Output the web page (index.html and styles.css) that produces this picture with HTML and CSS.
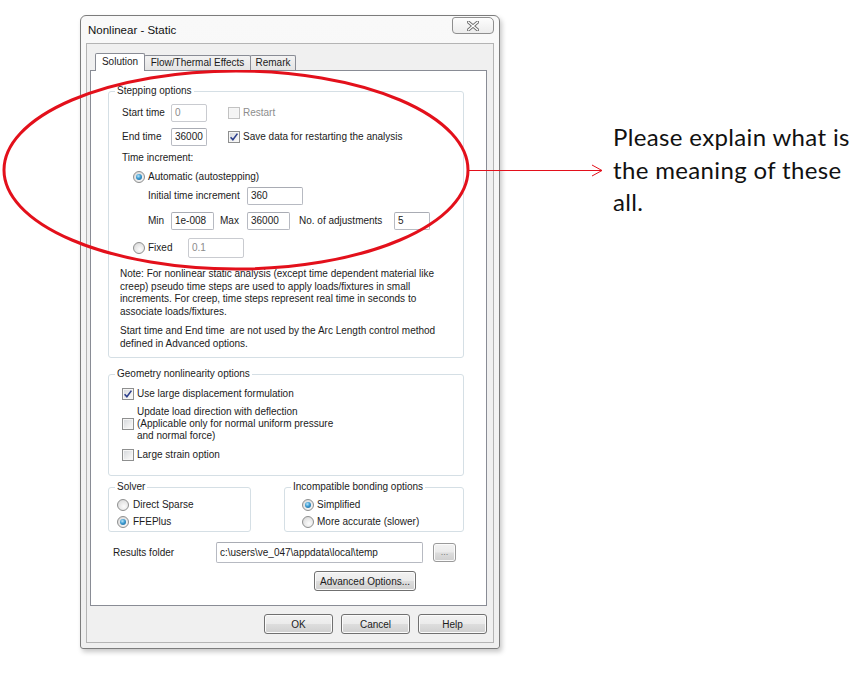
FILE: index.html
```html
<!DOCTYPE html>
<html>
<head>
<meta charset="utf-8">
<title>Nonlinear - Static</title>
<link rel="stylesheet" href="styles.css">
</head>
<body>
<div class="window">
  <div class="titlebar">
    <div class="title">Nonlinear - Static</div>
    <div class="closebtn">
      <svg width="12" height="10" viewBox="0 0 12 10">
        <path d="M1.5 1.2 L10.5 8.8 M10.5 1.2 L1.5 8.8" stroke="#6f6f6f" stroke-width="3.2" stroke-linecap="square" fill="none"/>
        <path d="M1.5 1.2 L10.5 8.8 M10.5 1.2 L1.5 8.8" stroke="#ffffff" stroke-width="1.3" stroke-linecap="square" fill="none"/>
      </svg>
    </div>
  </div>
  <div class="client">
    <div class="tabs">
      <div class="tab active">Solution</div>
      <div class="tab tab-flow">Flow/Thermal Effects</div>
      <div class="tab tab-remark">Remark</div>
    </div>
    <div class="panel">
      <fieldset class="group stepping">
        <legend>Stepping options</legend>
        <div class="gbody step-body">
          <div class="row r-start">
            <span class="lbl w-time">Start time</span>
            <span class="tb dis w-small">0</span>
            <span class="cb dis chk-gap"></span><span class="cbl dis-t">Restart</span>
          </div>
          <div class="row r-end">
            <span class="lbl w-time">End time</span>
            <span class="tb w-small">36000</span>
            <span class="cb chk-gap"><svg width="10" height="10" viewBox="0 0 10 10"><path d="M1.6 5.2 L3.9 7.8 L8.4 1.6" stroke="#2c3f8c" stroke-width="1.6" fill="none"/></svg></span><span class="cbl">Save data for restarting the analysis</span>
          </div>
          <div class="row r-inc">Time increment:</div>
          <div class="row r-auto indent1">
            <span class="rb on"></span><span class="rbl">Automatic (autostepping)</span>
          </div>
          <div class="row r-init indent2">
            <span class="lbl w-init">Initial time increment</span>
            <span class="tb w-mid">360</span>
          </div>
          <div class="row r-minmax indent2">
            <span class="lbl w-min">Min</span>
            <span class="tb w-mm">1e-008</span>
            <span class="lbl w-max">Max</span>
            <span class="tb w-mm">36000</span>
            <span class="lbl w-adj">No. of adjustments</span>
            <span class="tb w-small">5</span>
          </div>
          <div class="row r-fixed indent1">
            <span class="rb"></span><span class="rbl w-fixed">Fixed</span>
            <span class="tb dis w-mid tall">0.1</span>
          </div>
          <p class="note">Note: For nonlinear static analysis (except time dependent material like creep) pseudo time steps are used to apply loads/fixtures in small increments. For creep, time steps represent real time in seconds to associate loads/fixtures.</p>
          <p class="note note2">Start time and End time&nbsp; are not used by the Arc Length control method defined in Advanced options.</p>
        </div>
      </fieldset>

      <fieldset class="group geometry">
        <legend>Geometry nonlinearity options</legend>
        <div class="gbody geo-body">
          <div class="row g1">
            <span class="cb"><svg width="10" height="10" viewBox="0 0 10 10"><path d="M1.6 5.2 L3.9 7.8 L8.4 1.6" stroke="#2c3f8c" stroke-width="1.6" fill="none"/></svg></span><span class="cbl">Use large displacement formulation</span>
          </div>
          <div class="row g2">
            <span class="cb"></span><span class="cbl multi">Update load direction with deflection<br>(Applicable only for normal uniform pressure<br>and normal force)</span>
          </div>
          <div class="row g3">
            <span class="cb"></span><span class="cbl">Large strain option</span>
          </div>
        </div>
      </fieldset>

      <div class="pair">
        <fieldset class="group solver">
          <legend>Solver</legend>
          <div class="gbody small-body solver-body">
            <div class="row o1"><span class="rb"></span><span class="rbl">Direct Sparse</span></div>
            <div class="row o2"><span class="rb on"></span><span class="rbl">FFEPlus</span></div>
          </div>
        </fieldset>
        <fieldset class="group bonding">
          <legend>Incompatible bonding options</legend>
          <div class="gbody small-body bond-body">
            <div class="row o1"><span class="rb on"></span><span class="rbl">Simplified</span></div>
            <div class="row o2"><span class="rb"></span><span class="rbl">More accurate (slower)</span></div>
          </div>
        </fieldset>
      </div>

      <div class="results">
        <span class="lbl w-res">Results folder</span>
        <span class="tb w-path">c:\users\ve_047\appdata\local\temp</span>
        <span class="btn browse">...</span>
      </div>
      <div class="adv-row">
        <span class="btn adv">Advanced Options...</span>
      </div>
    </div>
    <div class="buttons">
      <span class="btn dlg">OK</span>
      <span class="btn dlg">Cancel</span>
      <span class="btn dlg">Help</span>
    </div>
  </div>
</div>

<svg class="annot" width="861" height="684" viewBox="0 0 861 684">
  <ellipse cx="236" cy="170" rx="232" ry="99" fill="none" stroke="#e3101b" stroke-width="3"/>
  <line x1="468" y1="170.5" x2="602" y2="170.5" stroke="#e3101b" stroke-width="1"/>
  <polyline points="592,165 602,170.5 592,176" fill="none" stroke="#e3101b" stroke-width="1"/>
</svg>

<div class="callout">Please explain what is<br>the meaning of these<br>all.</div>
</body>
</html>
```

FILE: styles.css
```css
* { box-sizing: border-box; }
html, body { margin: 0; padding: 0; }
body {
  width: 861px;
  height: 684px;
  background: #ffffff;
  position: relative;
  overflow: hidden;
  font-family: "Liberation Sans", Arial, sans-serif;
  font-size: 10px;
  color: #1b1b1b;
}

/* window */
.window {
  position: absolute;
  left: 80px;
  top: 15px;
  width: 420px;
  border: 1px solid #7c7c7c;
  border-radius: 6px 6px 3px 3px;
  background: linear-gradient(#f9f9f9, #efefef);
  padding: 0 5px 5px 5px;
  display: flex;
  flex-direction: column;
  box-shadow: 2px 3px 5px rgba(0, 0, 0, 0.22);
}
.titlebar {
  height: 27px;
  display: flex;
  justify-content: space-between;
  align-items: flex-start;
}
.title {
  font-size: 11.5px;
  line-height: 14px;
  margin: 7px 0 0 2px;
  color: #111;
}
.closebtn {
  width: 42px;
  height: 17px;
  margin-top: 1px;
  border: 1px solid #8f8f8f;
  border-radius: 3px 5px 4px 4px;
  background: linear-gradient(#fdfdfd, #ececec);
  display: flex;
  align-items: center;
  justify-content: center;
}

.client {
  border: 1px solid #b4b4b4;
  background: #f0f0f0;
  padding: 9px 6px 8px 3px;
  display: flex;
  flex-direction: column;
}

/* tabs */
.tabs {
  display: flex;
  align-items: flex-end;
  height: 17px;
  margin-left: 5px;
  position: relative;
  z-index: 2;
}
.tab {
  height: 15px;
  border: 1px solid #898c95;
  border-bottom: none;
  border-radius: 2px 2px 0 0;
  background: linear-gradient(#f3f3f3, #e4e4e4);
  display: flex;
  align-items: center;
  justify-content: center;
  line-height: 12px;
  padding-bottom: 1px;
}
.tab.active {
  width: 50px;
  height: 18px;
  margin-bottom: -1px;
  background: #ffffff;
  padding-bottom: 2px;
}
.tab-flow { width: 107px; margin-left: -1px; }
.tab-remark { width: 46px; margin-left: -1px; }

.panel {
  border: 1px solid #898c95;
  background: #ffffff;
  padding: 14px 22px 14px 17px;
  display: flex;
  flex-direction: column;
}

/* group boxes */
fieldset.group {
  margin: 0;
  padding: 0;
  border: 1px solid #d5dfe5;
  border-radius: 3px;
  min-width: 0;
}
fieldset.group legend {
  padding: 0 2px;
  margin-left: 6px;
  line-height: 12px;
  font-size: 10px;
  color: #1b1b1b;
}
.gbody { display: flex; flex-direction: column; }
.step-body { padding: 7px 0 7px 13px; }
fieldset.group.geometry { margin-top: 10px; }
.geo-body { padding: 7px 0 13px 13px; }

.row { display: flex; align-items: center; line-height: 12px; }
.r-start { height: 18px; }
.r-end { height: 18px; margin-top: 6px; }
.r-inc { height: 12px; margin-top: 6px; }
.r-auto { height: 13px; margin-top: 6px; }
.r-init { height: 18px; margin-top: 4px; }
.r-minmax { height: 18px; margin-top: 7px; }
.r-fixed { height: 20px; margin-top: 8px; }
.indent1 { padding-left: 11px; }
.indent2 { padding-left: 26px; }

.lbl { display: inline-block; white-space: nowrap; }
.w-time { width: 49px; }
.w-init { width: 99px; }
.w-min { width: 23px; }
.w-max { width: 27px; margin-left: 6px; }
.w-adj { width: 95px; margin-left: 9px; }
.w-fixed { width: 40px; }
.w-res { width: 103px; }

/* text boxes */
.tb {
  display: inline-flex;
  align-items: center;
  height: 18px;
  border: 1px solid #b7bac2;
  border-top-color: #a9acb4;
  border-radius: 2px;
  background: #ffffff;
  padding: 0 3px;
  white-space: nowrap;
  color: #1b1b1b;
}
.tb.dis { color: #8c8c8c; border-color: #c9cbd0; }
.tb.tall { height: 20px; }
.w-small { width: 36px; }
.w-mid { width: 56px; }
.w-mm { width: 43px; }
.w-path { width: 207px; height: 21px; }

/* checkboxes */
.cb {
  width: 12px;
  height: 12px;
  flex: none;
  border: 1px solid #8e8f8f;
  background: linear-gradient(135deg, #d3d6da 0%, #f2f2f2 70%, #fbfbfb 100%);
  box-shadow: inset 0 0 0 1px #f6f6f6;
  display: inline-flex;
  align-items: center;
  justify-content: center;
}
.cb.dis { border-color: #c2c2c2; background: #f4f4f4; }
.chk-gap { margin-left: 21px; }
.cbl { margin-left: 3px; white-space: nowrap; }
.dis-t { color: #8d8d8d; }
.cbl.multi { line-height: 12px; }
.g1 { height: 14px; }
.g2 { margin-top: 5px; }
.g3 { height: 14px; margin-top: 6px; }

/* radios */
.rb {
  width: 12px;
  height: 12px;
  flex: none;
  border-radius: 50%;
  border: 1px solid #8e8f8f;
  background: radial-gradient(circle at 60% 65%, #fcfcfc 0%, #e6e6e6 55%, #cfcfcf 100%);
  position: relative;
}
.rb.on::after {
  content: "";
  position: absolute;
  left: 2px;
  top: 2px;
  width: 6px;
  height: 6px;
  border-radius: 50%;
  background: radial-gradient(circle at 40% 35%, #b8e6fb 0%, #3c9ad0 45%, #1a5c8c 100%);
}
.rbl { margin-left: 3px; white-space: nowrap; }

.note {
  margin: 10px 0 0 -2px;
  line-height: 12.7px;
  width: 325px;
}
.note.note2 { margin-top: 6px; }

/* solver / bonding */
.pair {
  display: flex;
  justify-content: space-between;
  margin-top: 5px;
}
.solver { width: 143px; }
.bonding { width: 180px; }
.small-body { padding: 6px 0 3px 8px; }
.bond-body { padding-left: 17px; }
.o1 { height: 12px; }
.o2 { height: 12px; margin-top: 5px; }
.solver .rbl { margin-left: 4px; }

/* results */
.results {
  display: flex;
  align-items: center;
  margin-top: 10px;
  padding-left: 5px;
  height: 21px;
}
.btn {
  display: inline-flex;
  align-items: center;
  justify-content: center;
  border: 1px solid #707070;
  border-radius: 3px;
  background: linear-gradient(#f2f2f2 0%, #ebebeb 48%, #dddddd 52%, #cfcfcf 100%);
  box-shadow: inset 0 0 0 1px #fbfbfb;
  white-space: nowrap;
  color: #1b1b1b;
}
.browse {
  width: 23px;
  height: 19px;
  margin-left: 10px;
  color: #7a7a7a;
  border-color: #9a9a9a;
  font-size: 9px;
  padding-bottom: 2px;
}
.adv-row { margin-top: 8px; padding-left: 206px; }
.adv { width: 102px; height: 20px; }

.buttons {
  display: flex;
  justify-content: flex-end;
  gap: 8px;
  margin-top: 8px;
}
.dlg { width: 69px; height: 20px; }

/* annotation */
.annot {
  position: absolute;
  left: 0;
  top: 0;
  pointer-events: none;
}
.callout {
  position: absolute;
  left: 613px;
  top: 121px;
  font-family: Lato, "Open Sans", sans-serif;
  font-size: 24px;
  letter-spacing: 0.35px;
  line-height: 32.5px;
  color: #111;
  white-space: nowrap;
}
```
